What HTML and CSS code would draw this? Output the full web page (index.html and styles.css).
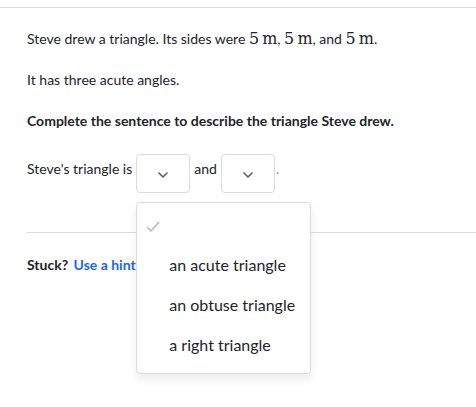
FILE: index.html
```html
<!DOCTYPE html>
<html>
<head>
<meta charset="utf-8">
<link rel="stylesheet" href="styles.css">
</head>
<body>
<div class="page">
  <div class="content">
    <p class="para">Steve drew a triangle. Its sides were <span class="math">5 m</span>, <span class="math">5 m</span>, and <span class="math">5 m</span>.</p>
    <p class="para">It has three acute angles.</p>
    <p class="para bold">Complete the sentence to describe the triangle Steve drew.</p>
    <div class="sentence">
      <span class="word">Steve's triangle is</span>
      <span class="dd-wrap">
        <span class="dd">
          <svg width="12" height="8" viewBox="0 0 12 8"><path d="M2 2 L6 6 L10 2" fill="none" stroke="#5b5e66" stroke-width="1.6" stroke-linecap="round" stroke-linejoin="round"/></svg>
        </span>
        <div class="menu">
          <div class="item"><span class="check"><svg width="14" height="12" viewBox="0 0 14 12"><path d="M1.5 6.5 L5 10 L12.5 1.5" fill="none" stroke="#b8b9bc" stroke-width="1.6" stroke-linecap="round" stroke-linejoin="round"/></svg></span></div>
          <div class="item"><span class="label">an acute triangle</span></div>
          <div class="item"><span class="label">an obtuse triangle</span></div>
          <div class="item"><span class="label">a right triangle</span></div>
        </div>
      </span>
      <span class="word">and</span>
      <span class="dd">
        <svg width="12" height="8" viewBox="0 0 12 8"><path d="M2 2 L6 6 L10 2" fill="none" stroke="#5b5e66" stroke-width="1.6" stroke-linecap="round" stroke-linejoin="round"/></svg>
      </span>
      <span class="word dot">.</span>
    </div>
  </div>
  <div class="footer">
    <span class="stuck">Stuck?</span>
    <span class="hint">Use a hint</span>
  </div>
</div>
</body>
</html>
```

FILE: styles.css
```css
html, body {
  margin: 0;
  padding: 0;
  background: #ffffff;
}
body {
  font-family: Lato, "Liberation Sans", sans-serif;
  font-size: 14px;
  color: #21242c;
  min-height: 407px;
}
.page {
  margin-top: 7px;
  border-top: 1px solid #dcdcdd;
  width: 476px;
  min-height: 399px;
}
.content {
  padding: 21px 0 0 27px;
}
.para {
  margin: 0 0 21px 0;
  line-height: 20px;
}
.bold {
  font-weight: bold;
}
.math {
  font-family: "DejaVu Serif", "Liberation Serif", serif;
  font-size: 16px;
  word-spacing: -2px;
}
.sentence {
  display: flex;
  align-items: flex-start;
  gap: 4px;
  margin-top: 23px;
}
.word {
  line-height: 20px;
  padding-top: 5px;
}
.dd-wrap {
  position: relative;
  display: flex;
}
.dd {
  border: 1px solid #dadbdc;
  border-radius: 4px;
  display: flex;
  align-items: center;
  justify-content: center;
  padding-top: 3px;
  box-sizing: border-box;
  height: 39px;
  width: 54px;
}
.dd svg {
  display: block;
}
.dot {
  margin-left: -3px;
  color: #8a8c90;
}
.menu {
  position: absolute;
  left: 0;
  top: 48px;
  width: 175px;
  box-sizing: border-box;
  padding: 1px 0 9px 0;
  background: #fff;
  border: 1px solid #dadbdc;
  border-radius: 4px;
  box-shadow: 0 6px 8px rgba(33, 36, 44, 0.08);
  z-index: 5;
}
.item {
  height: 40px;
  display: flex;
  align-items: center;
  padding-left: 32px;
  position: relative;
  font-size: 16px;
}
.check {
  position: absolute;
  left: 9px;
  top: 17px;
  display: block;
}
.check svg {
  display: block;
}
.footer {
  margin: 39px 0 0 27px;
  border-top: 1px solid #dcdcdd;
  padding-top: 23px;
  font-weight: bold;
  font-size: 14px;
}
.stuck {
  color: #21242c;
  margin-right: 2px;
}
.hint {
  color: #1865f2;
}
```
